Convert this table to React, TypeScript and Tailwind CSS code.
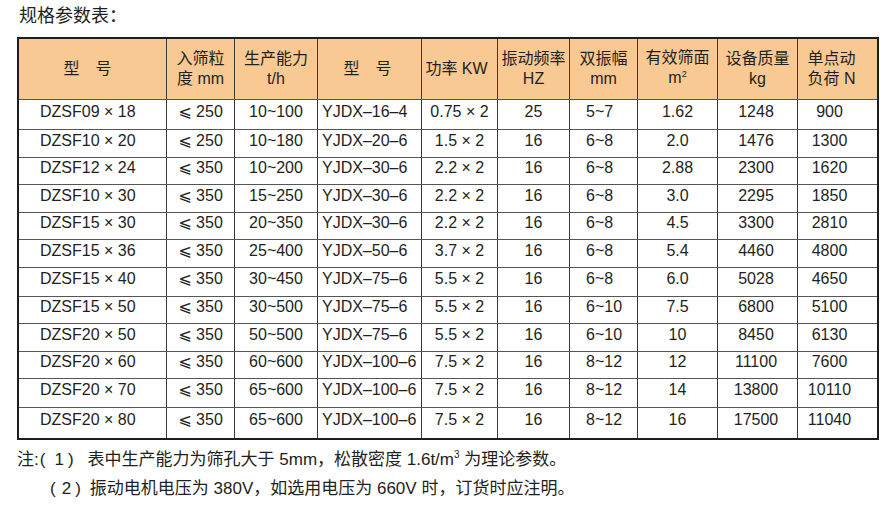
import React from "react";

const FONT = { fontFamily: '"Liberation Sans", "Noto Sans CJK SC", sans-serif' };

const GRID =
  "grid grid-cols-[147px_68px_83px_104px_76px_72px_68px_80px_80px_80px]";

type Row = { h: string; c: string[] };

const rows: Row[] = [
  { h: "h-[30px]", c: ["DZSF09 × 18", "250", "10~100", "YJDX–16–4", "0.75 × 2", "25", "5~7", "1.62", "1248", "900"] },
  { h: "h-[28px]", c: ["DZSF10 × 20", "250", "10~180", "YJDX–20–6", "1.5 × 2", "16", "6~8", "2.0", "1476", "1300"] },
  { h: "h-[27px]", c: ["DZSF12 × 24", "350", "10~200", "YJDX–30–6", "2.2 × 2", "16", "6~8", "2.88", "2300", "1620"] },
  { h: "h-[28px]", c: ["DZSF10 × 30", "350", "15~250", "YJDX–30–6", "2.2 × 2", "16", "6~8", "3.0", "2295", "1850"] },
  { h: "h-[27px]", c: ["DZSF15 × 30", "350", "20~350", "YJDX–30–6", "2.2 × 2", "16", "6~8", "4.5", "3300", "2810"] },
  { h: "h-[28px]", c: ["DZSF15 × 36", "350", "25~400", "YJDX–50–6", "3.7 × 2", "16", "6~8", "5.4", "4460", "4800"] },
  { h: "h-[29px]", c: ["DZSF15 × 40", "350", "30~450", "YJDX–75–6", "5.5 × 2", "16", "6~8", "6.0", "5028", "4650"] },
  { h: "h-[27px]", c: ["DZSF15 × 50", "350", "30~500", "YJDX–75–6", "5.5 × 2", "16", "6~10", "7.5", "6800", "5100"] },
  { h: "h-[28px]", c: ["DZSF20 × 50", "350", "50~500", "YJDX–75–6", "5.5 × 2", "16", "6~10", "10", "8450", "6130"] },
  { h: "h-[27px]", c: ["DZSF20 × 60", "350", "60~600", "YJDX–100–6", "7.5 × 2", "16", "8~12", "12", "11100", "7600"] },
  { h: "h-[29px]", c: ["DZSF20 × 70", "350", "65~600", "YJDX–100–6", "7.5 × 2", "16", "8~12", "14", "13800", "10110"] },
  { h: "h-[31px]", c: ["DZSF20 × 80", "350", "65~600", "YJDX–100–6", "7.5 × 2", "16", "8~12", "16", "17500", "11040"] },
];

const cellCls = [
  "justify-start pl-[21px]",
  "justify-center border-l border-[#3a3a3a]",
  "justify-center border-l border-[#3a3a3a]",
  "justify-start pl-[4px] border-l border-[#3a3a3a]",
  "justify-center border-l border-[#3a3a3a]",
  "justify-center border-l border-[#3a3a3a]",
  "justify-start pl-[16px] border-l border-[#3a3a3a]",
  "justify-center border-l border-[#3a3a3a]",
  "justify-center pr-[3px] border-l border-[#3a3a3a]",
  "justify-center pr-[16px] border-l border-[#3a3a3a]",
];

function HeadCell({ children, cls }: { children: React.ReactNode; cls: string }) {
  return (
    <div className={`flex flex-col items-center justify-center text-center leading-[20px] ${cls}`}>
      {children}
    </div>
  );
}

export default function App() {
  return (
    <div className="w-[889px] h-[510px] bg-white text-[#231f20] overflow-hidden" style={FONT}>
      <div className="pt-[3px] pl-[19px] h-[29px] text-[18px] leading-[26px]">规格参数表：</div>

      <div className="ml-[17px] mt-[8px] w-[862px] border-2 border-[#1e1e1e]">
        {/* header */}
        <div className={`${GRID} h-[60px] bg-[#f9c994] text-[16px]`}>
          <HeadCell cls="pr-[10px]">型　号</HeadCell>
          <HeadCell cls="border-l border-[#3a3a3a]">
            <span>入筛粒</span>
            <span>度 mm</span>
          </HeadCell>
          <HeadCell cls="border-l border-[#3a3a3a]">
            <span>生产能力</span>
            <span>t/h</span>
          </HeadCell>
          <HeadCell cls="border-l border-[#3a3a3a] pr-[4px]">型　号</HeadCell>
          <HeadCell cls="border-l border-[#3a3a3a] pr-[6px]">功率 KW</HeadCell>
          <HeadCell cls="border-l border-[#3a3a3a]">
            <span>振动频率</span>
            <span>HZ</span>
          </HeadCell>
          <HeadCell cls="border-l border-[#3a3a3a]">
            <span>双振幅</span>
            <span>mm</span>
          </HeadCell>
          <HeadCell cls="border-l border-[#3a3a3a]">
            <span>有效筛面</span>
            <span>
              m<span className="relative top-[-6px] text-[9px]">2</span>
            </span>
          </HeadCell>
          <HeadCell cls="border-l border-[#3a3a3a]">
            <span>设备质量</span>
            <span>kg</span>
          </HeadCell>
          <HeadCell cls="border-l border-[#3a3a3a] pr-[12px]">
            <span>单点动</span>
            <span>负荷 N</span>
          </HeadCell>
        </div>

        {/* body */}
        {rows.map((r, i) => (
          <div key={i} className={`${GRID} ${r.h} border-t border-[#555555] text-[16px] leading-[20px]`}>
            {r.c.map((v, j) => (
              <div key={j} className={`flex items-center pb-[6px] whitespace-nowrap ${cellCls[j]}`}>
                {j === 1 ? (
                  <span>
                    <span style={{ fontFamily: '"DejaVu Sans", sans-serif' }} className="text-[16px]">
                      ⩽
                    </span>{" "}
                    {v}
                  </span>
                ) : (
                  v
                )}
              </div>
            ))}
          </div>
        ))}
      </div>

      <div className="mt-[6px] text-[17px] leading-[27px]">
        <div className="flex pl-[17px] whitespace-nowrap">
          <span>注:</span>
          <span className="ml-[1px]">(</span>
          <span className="ml-[9px]">1</span>
          <span className="ml-[4px]">)</span>
          <span className="ml-[14px]">
            表中生产能力为筛孔大于 5mm，松散密度 1.6t/m
            <span className="relative top-[-7px] text-[10px]">3</span> 为理论参数。
          </span>
        </div>
        <div className="flex pl-[50px] whitespace-nowrap">
          <span>(</span>
          <span className="ml-[6px]">2</span>
          <span className="ml-[4px]">)</span>
          <span className="ml-[9px]">振动电机电压为 380V，如选用电压为 660V 时，订货时应注明。</span>
        </div>
      </div>
    </div>
  );
}
